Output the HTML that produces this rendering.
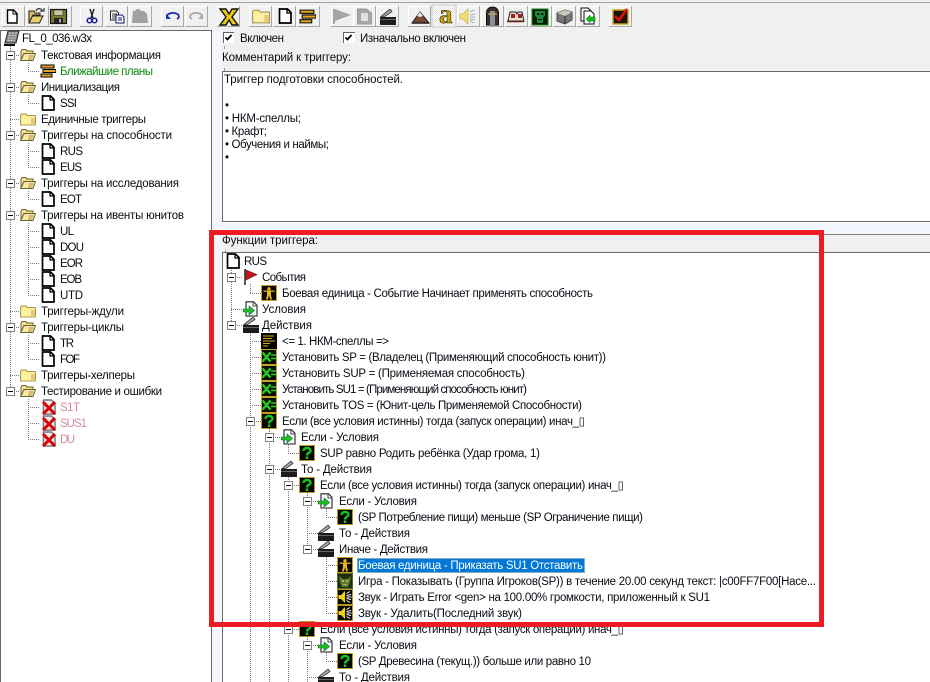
<!DOCTYPE html>
<html lang="ru">
<head>
<meta charset="utf-8">
<title>FL_0_036.w3x</title>
<style>
html,body{margin:0;padding:0;width:930px;height:682px;overflow:hidden;background:#f0f0f0}
svg{display:block;position:absolute;left:0;top:0}
text{font-family:"Liberation Sans",Arial,sans-serif;font-size:11.5px;fill:#0a0a14;white-space:pre}
.d{stroke:#777;stroke-width:1;stroke-dasharray:1 1;fill:none;shape-rendering:crispEdges}
.e{fill:#fff;stroke:#808080;stroke-width:1;shape-rendering:crispEdges}
.m{stroke:#000;stroke-width:1;shape-rendering:crispEdges}
.g{fill:#0a8a0a}
.p{fill:#d5899f}
</style>
</head>
<body>
<svg width="930" height="682" viewBox="0 0 930 682" xmlns="http://www.w3.org/2000/svg">
<defs>
<symbol id="doc" viewBox="0 0 16 16"><path d="M2.500 1h8l3.500 3.500V15h-11.500z" fill="#fff" stroke="#000" stroke-width="1.700"/><path d="M10 1v4h4" fill="none" stroke="#000" stroke-width="1.300"/></symbol>
<symbol id="fc" viewBox="0 0 16 16"><path d="M.5 14V4l1-1h5l1 1.500H15.500V14z" fill="#ffe98a" stroke="#a89a60"/><path d="M2 6h13v7H2z" fill="#fff2a8"/><path d="M11 7h4v6h-4z" fill="#e8c878"/></symbol>
<symbol id="fo" viewBox="0 0 16 16"><path d="M1 13V4l1-1.500h4l1 1.500h6v3H5z" fill="#f3df90" stroke="#6a6030"/><path d="M.8 13.500 4 6.500h11.500l-2.500 7z" fill="#f8e8a8" stroke="#6a6030"/><path d="M9 8h5l-2 5H8z" fill="#d8b878"/></symbol>
<symbol id="lst" viewBox="0 0 16 16"><path d="M1 2h13v3H1zM3 6.500h13v3H3zM1 11h11v3H1z" fill="#e5a820" stroke="#000"/></symbol>
<symbol id="flag" viewBox="0 0 16 16"><path d="M2 0v16" stroke="#222" stroke-width="1.500"/><path d="M3 1l11 4.500L3 11z" fill="#c8141e" stroke="#701014" stroke-width=".6"/></symbol>
<symbol id="unit" viewBox="0 0 16 16"><rect x=".5" y=".5" width="15" height="15" fill="#0a0a00" stroke="#c8a020"/><circle cx="8" cy="3.800" r="1.700" fill="#e8b820"/><path d="M2.500 5.500h11v1.300H10V10l1 4.500H9.300L8 10.500 6.700 14.500H5L6 10V6.800H2.500z" fill="#e8b820"/></symbol>
<symbol id="cond" viewBox="0 0 16 16"><path d="M3 .8h7.500L14 4.300V15H3z" fill="#fff" stroke="#444" stroke-width="1.300"/><path d="M10 1v4h4" fill="none" stroke="#444"/><path d="M0 8h6V5l5.500 4.500L6 14v-3H0z" fill="#1fc01f" stroke="#063" stroke-width=".6"/></symbol>
<symbol id="clap" viewBox="0 0 16 16"><rect x="0" y="8" width="16" height="8" fill="#1c1c1c"/><rect x="0" y="10" width="16" height="1" fill="#666"/><path d="M1 7.500 10 0l2 2.500L4 8z" fill="#a4a4a4" stroke="#222" stroke-width=".7"/></symbol>
<symbol id="cmt" viewBox="0 0 16 16"><rect width="16" height="16" fill="#060600"/><path d="M2 2.500h11v1H2zM2 5h9v1H2zM2 7.500h12v1H2zM2 10h7v1H2zM2 12.500h5v1H2z" fill="#d8a820"/></symbol>
<symbol id="set" viewBox="0 0 16 16"><rect x=".5" y=".5" width="15" height="15" fill="#081000" stroke="#c8a020"/><path d="M1.500 3.500l8 9M9.500 3.500l-8 9" stroke="#20d020" stroke-width="2.400"/><path d="M10 6h5M10 9.500h5" stroke="#20d020" stroke-width="1.600"/></symbol>
<symbol id="if" viewBox="0 0 16 16"><rect x=".5" y=".5" width="15" height="15" fill="#050800" stroke="#b89820"/><path d="M4.500 6C4.500 2 11.500 2 11.500 5.500 11.500 8 8 7.500 8 10.500" fill="none" stroke="#18c818" stroke-width="2.300"/><rect x="6.800" y="11.500" width="2.500" height="2.500" fill="#18c818"/></symbol>
<symbol id="gm" viewBox="0 0 16 16"><rect x=".5" y=".5" width="15" height="15" fill="#1e2c0e" stroke="#5a6a20"/><path d="M2 3l4 3h4l4-3-1 6-2 5H5L3 9z" fill="#5f7a2c"/><path d="M5 7h2v2H5zM9 7h2v2H9zM6 11h4v1H6z" fill="#a8b850"/></symbol>
<symbol id="snd" viewBox="0 0 16 16"><rect x=".5" y=".5" width="15" height="15" fill="#050500" stroke="#b89820"/><path d="M1.500 6h2.500l4-4v12l-4-4H1.500z" fill="#f0d010"/><path d="M9.500 4.500 13 2.500M9.500 6.500 14 5.500M9.500 8H14.500M9.500 9.500 14 10.500M9.500 11.500 13 13.500" stroke="#fff" stroke-width="1"/></symbol>
<symbol id="off" viewBox="0 0 16 16"><path d="M2.500 1h8l3.500 3.500V15H2.500z" fill="#eee" stroke="#777" stroke-width="1.500"/><path d="M2 3l12 12M14 3 2 15" stroke="#e00000" stroke-width="3"/></symbol>
<symbol id="map" viewBox="0 0 16 16"><path d="M4 1h11l-3 12H1z" fill="#8a8a8a" stroke="#222"/><path d="M5 3h8M4.500 5.500h7.500M4 8h7.500M3.500 10.500h7" stroke="#d0d0d0" stroke-dasharray="2 1"/><path d="M0 15h11" stroke="#111" stroke-width="2"/></symbol>
<pattern id="dith" width="2" height="2" patternUnits="userSpaceOnUse"><rect width="2" height="2" fill="#fff"/><rect width="1" height="1" fill="#e4e4e4"/><rect x="1" y="1" width="1" height="1" fill="#e4e4e4"/></pattern>
<symbol id="btn" viewBox="0 0 23 21"><rect width="23" height="21" fill="#f0f0f0"/><path d="M.5 20.500V.5h22" fill="none" stroke="#fff"/><path d="M22.500 0v20.500H0" fill="none" stroke="#a8a8a8"/></symbol>
</defs>

<!-- window background -->
<rect width="930" height="682" fill="#f0f0f0"/>
<rect y="2" width="930" height="1" fill="#a0a0a0"/>

<!-- toolbar buttons -->
<g>
<use href="#btn" x="2" y="6" width="23" height="21"/><use href="#btn" x="26" y="6" width="23" height="21"/><use href="#btn" x="49" y="6" width="23" height="21"/>
<use href="#btn" x="80" y="6" width="23" height="21"/><use href="#btn" x="105" y="6" width="23" height="21"/><use href="#btn" x="129" y="6" width="23" height="21"/>
<use href="#btn" x="161" y="6" width="23" height="21"/><use href="#btn" x="185" y="6" width="23" height="21"/>
<use href="#btn" x="217" y="6" width="23" height="21"/>
<use href="#btn" x="249" y="6" width="23" height="21"/><use href="#btn" x="273" y="6" width="23" height="21"/><use href="#btn" x="297" y="6" width="23" height="21"/>
<use href="#btn" x="331" y="6" width="23" height="21"/><use href="#btn" x="353" y="6" width="23" height="21"/><use href="#btn" x="376" y="6" width="23" height="21"/>
<use href="#btn" x="408" y="6" width="23" height="21"/>
<rect x="432" y="5" width="24" height="22" fill="url(#dith)" stroke="#c8c8c8"/>
<use href="#btn" x="457" y="6" width="23" height="21"/><use href="#btn" x="481" y="6" width="23" height="21"/><use href="#btn" x="505" y="6" width="23" height="21"/>
<use href="#btn" x="529" y="6" width="23" height="21"/><use href="#btn" x="553" y="6" width="23" height="21"/><use href="#btn" x="577" y="6" width="23" height="21"/>
<use href="#btn" x="609" y="6" width="23" height="21"/>
</g>

<!-- toolbar icons -->
<path d="M7.500 10h6l3.500 3.500V23H7.500z" fill="#fff" stroke="#000" stroke-width="1.400"/><path d="M13 10v4h4" fill="none" stroke="#000"/>
<path d="M29 23V11h5l1 2h5v2H33l-4 8z" fill="#d8c060" stroke="#222"/><path d="M29 23l3.500-7H43l-3.500 7z" fill="#e8d070" stroke="#222"/><path d="M36 11c1-3 4-3 6-1l-1 1h3v-3" fill="none" stroke="#333" stroke-width="1.200"/>
<rect x="50.500" y="9.500" width="16" height="14" fill="#7a7a30" stroke="#111" stroke-width="1.200"/><rect x="54" y="10" width="9" height="5.500" fill="#c8c8a0" stroke="#222" stroke-width=".6"/><rect x="54" y="18" width="9" height="5.500" fill="#222"/><rect x="59" y="19" width="2" height="3.500" fill="#aaa"/>
<path d="M94 9l-3 9M90 9l3 9" stroke="#111" stroke-width="1.300" fill="none"/><circle cx="89.500" cy="20.500" r="2.300" fill="none" stroke="#1a1aa0" stroke-width="1.500"/><circle cx="94.500" cy="20.500" r="2.300" fill="none" stroke="#1a1aa0" stroke-width="1.500"/>
<path d="M110.500 11h6l2 2v7h-8z" fill="#fff" stroke="#222"/><path d="M112 14h5M112 16h5M112 18h5" stroke="#334"/><path d="M116 15h6l2 2v6h-8z" fill="#fff" stroke="#12126a"/><path d="M118 18h4M118 20h4" stroke="#12126a"/>
<path d="M133 11h11l3 3 1 9h-16z" fill="#a0a0a0"/><circle cx="138" cy="12" r="3" fill="#a0a0a0"/>
<path d="M167 17a6 3.500 0 1 1 10 2" fill="none" stroke="#1a2ea8" stroke-width="1.800"/><path d="M166 14v5h5z" fill="#1a2ea8"/>
<path d="M202 17a6 3.500 0 1 0-10 2" fill="none" stroke="#a8a8a8" stroke-width="1.800"/><path d="M203 14v5h-5z" fill="#a8a8a8"/>
<path d="M220 9h6l3 5 3-5h6l-6 8 6 8h-6l-3-5-3 5h-6l6-8z" fill="#e8c810" stroke="#111" stroke-width="1.400"/>
<use href="#fc" x="252" y="7" width="18" height="18"/>
<use href="#doc" x="277" y="8" width="16" height="16"/>
<use href="#lst" x="299" y="8" width="17" height="17"/>
<path d="M334 9v15" stroke="#a6a6a6" stroke-width="2"/><path d="M335 9l16 6-16 6z" fill="#a6a6a6"/>
<path d="M357.500 9h9l5 4v11h-14z" fill="#a6a6a6" stroke="#999"/><rect x="361" y="13" width="7" height="8" fill="#e0e0e0"/>
<use href="#clap" x="380" y="9" width="16" height="16"/>
<path d="M412 23l8-11 9 11z" fill="#7a4a30" stroke="#222"/><path d="M417 16l3-4 3 4-3 1z" fill="#e8e8e8"/><path d="M412 23h17" stroke="#222" stroke-width="1.500"/>
<text x="439" y="23" style="font-size:27px;font-family:'Liberation Serif',serif;font-weight:bold;fill:#c8a010;stroke:#332800;stroke-width:.6">a</text>
<path d="M460 14h3l5-5v15l-5-5h-3z" fill="#efe070" stroke="#b8a840" stroke-width=".6"/><path d="M470 12l4-2M470 15l5-1M470 17h5M470 19l5 1M470 21l4 2" stroke="#b0b0b0"/>
<path d="M486.500 25V13c0-8 12-8 12 0v12z" fill="#36322a" stroke="#111"/><path d="M490 11h5v14h-5z" fill="#8a8f9a"/><path d="M488 14h9" stroke="#b8a060" stroke-width="1.500"/>
<path d="M508 21l2-9h6l1 2 1-2h4l2 9z" fill="#e8e0d0" stroke="#222"/><path d="M511 14h4v4h-4zM518 14h4v4h-4z" fill="#a82020"/><path d="M507 21.500h17" stroke="#6a2010" stroke-width="1.500"/>
<rect x="532" y="9" width="16" height="16" fill="#0a1a05" stroke="#118a11"/><path d="M535 11h10v5l-2 2v5h-6v-5l-2-2z" fill="#1c8a3a"/><path d="M537 13h2.500v2H537zM541 13h2.500v2H541zM538 19h4v1h-4z" fill="#062010"/>
<path d="M557 13l8-3 7 2v8l-7 4-8-3z" fill="#777" stroke="#444"/><path d="M557 13l8 3 7-4-7-2z" fill="#c8c8b8"/><path d="M565 16v8" stroke="#333"/>
<path d="M581 8h7l3 3v10h-10z" fill="#fff" stroke="#111"/><path d="M584 11h7l3 3v10h-10z" fill="#fff" stroke="#111"/><path d="M586 19l4-4v2h5v4h-5v2z" fill="#10c010" stroke="#063" stroke-width=".5"/>
<rect x="613" y="10" width="15" height="14" fill="#1a1400" stroke="#c8a020" stroke-width="1.400"/><path d="M615 16l4 4 8-11" fill="none" stroke="#e01010" stroke-width="2.600"/>

<!-- left panel -->
<rect x="1" y="30" width="210" height="652" fill="#fff"/>
<rect x="0" y="30" width="212" height="1" fill="#696969"/>
<rect x="0" y="30" width="1" height="652" fill="#696969"/>
<rect x="211" y="30" width="1" height="652" fill="#696969"/>

<!-- splitters -->
<rect x="212" y="30" width="10" height="652" fill="#f3f6fc"/>
<rect x="222" y="222" width="708" height="13" fill="#f3f6fc"/>
<rect x="222" y="222" width="708" height="1" fill="#fff"/>

<!-- comment box -->
<rect x="222" y="71" width="708" height="151" fill="#fff"/>
<rect x="222" y="71" width="708" height="1" fill="#696969"/>
<rect x="222" y="221" width="708" height="1" fill="#696969"/>
<rect x="222" y="71" width="1" height="151" fill="#696969"/>

<!-- functions area -->
<rect x="222" y="235" width="708" height="17" fill="#f0f0f0"/>
<rect x="222" y="234" width="708" height="1" fill="#808080"/>
<rect x="222" y="252" width="708" height="430" fill="#fff"/>
<rect x="222" y="252" width="708" height="1" fill="#696969"/>
<rect x="222" y="252" width="1" height="430" fill="#696969"/>
<rect x="224" y="46" width="1" height="3" fill="#999"/>
<rect x="224" y="68" width="1" height="3" fill="#999"/>
<rect x="225" y="250" width="1" height="2" fill="#999"/>

<!-- checkboxes -->
<rect x="223" y="32" width="11" height="11" fill="#fff"/><path d="M223.500 43V32.500H234" fill="none" stroke="#666"/><path d="M225.500 37.500l2 2 4-4.500" fill="none" stroke="#000" stroke-width="1.700"/>
<rect x="343" y="32" width="12" height="11" fill="#fff"/><path d="M343.500 43V32.500H355" fill="none" stroke="#666"/><path d="M345.500 37.500l2 2 4-4.500" fill="none" stroke="#000" stroke-width="1.700"/>
<text x="240" y="42" textLength="44" lengthAdjust="spacing">Включен</text>
<text x="360" y="42" textLength="106" lengthAdjust="spacing">Изначально включен</text>
<text x="222" y="61" textLength="129" lengthAdjust="spacing">Комментарий к триггеру:</text>

<!-- comment text -->
<text x="224" y="83" textLength="179" lengthAdjust="spacing">Триггер подготовки способностей.</text>
<text x="225" y="109">•</text>
<text x="225" y="122" textLength="76" lengthAdjust="spacing">• НКМ-спеллы;</text>
<text x="225" y="135" textLength="42" lengthAdjust="spacing">• Крафт;</text>
<text x="225" y="148" textLength="104" lengthAdjust="spacing">• Обучения и наймы;</text>
<text x="225" y="161">•</text>

<text x="222" y="244" textLength="96" lengthAdjust="spacing">Функции триггера:</text>

<!-- left tree lines -->
<path class="d" d="M10.500 46V391M28.500 63V71M28.500 95V103M28.500 143V167M28.500 191V199M28.500 223V295M28.500 335V359M28.500 399V439"/>
<path class="d" d="M10 55.500H20M10 87.500H20M10 119.500H20M10 135.500H20M10 183.500H20M10 215.500H20M10 311.500H20M10 327.500H20M10 375.500H20M10 391.500H20M28 71.500H40M28 103.500H40M28 151.500H40M28 167.500H40M28 199.500H40M28 231.500H40M28 247.500H40M28 263.500H40M28 279.500H40M28 295.500H40M28 343.500H40M28 359.500H40M28 407.500H40M28 423.500H40M28 439.500H40"/>

<!-- left tree icons -->
<use href="#map" x="4" y="30" width="16" height="16"/>
<use href="#fo" x="20" y="47" width="16" height="16"/>
<use href="#lst" x="40" y="63" width="16" height="16"/>
<use href="#fo" x="20" y="79" width="16" height="16"/>
<use href="#doc" x="40" y="95" width="16" height="16"/>
<use href="#fc" x="20" y="111" width="16" height="16"/>
<use href="#fo" x="20" y="127" width="16" height="16"/>
<use href="#doc" x="40" y="143" width="16" height="16"/>
<use href="#doc" x="40" y="159" width="16" height="16"/>
<use href="#fo" x="20" y="175" width="16" height="16"/>
<use href="#doc" x="40" y="191" width="16" height="16"/>
<use href="#fo" x="20" y="207" width="16" height="16"/>
<use href="#doc" x="40" y="223" width="16" height="16"/>
<use href="#doc" x="40" y="239" width="16" height="16"/>
<use href="#doc" x="40" y="255" width="16" height="16"/>
<use href="#doc" x="40" y="271" width="16" height="16"/>
<use href="#doc" x="40" y="287" width="16" height="16"/>
<use href="#fc" x="20" y="303" width="16" height="16"/>
<use href="#fo" x="20" y="319" width="16" height="16"/>
<use href="#doc" x="40" y="335" width="16" height="16"/>
<use href="#doc" x="40" y="351" width="16" height="16"/>
<use href="#fc" x="20" y="367" width="16" height="16"/>
<use href="#fo" x="20" y="383" width="16" height="16"/>
<use href="#off" x="41" y="399" width="16" height="16"/>
<use href="#off" x="41" y="415" width="16" height="16"/>
<use href="#off" x="41" y="431" width="16" height="16"/>

<!-- left tree expanders -->
<g class="e"><rect x="6.500" y="51.500" width="8" height="8"/><rect x="6.500" y="83.500" width="8" height="8"/><rect x="6.500" y="131.500" width="8" height="8"/><rect x="6.500" y="179.500" width="8" height="8"/><rect x="6.500" y="211.500" width="8" height="8"/><rect x="6.500" y="323.500" width="8" height="8"/><rect x="6.500" y="387.500" width="8" height="8"/></g>
<path class="m" d="M8 55.500h5M8 87.500h5M8 135.500h5M8 183.500h5M8 215.500h5M8 327.500h5M8 391.500h5"/>

<!-- left tree text -->
<text x="22" y="42" textLength="70" lengthAdjust="spacing">FL_0_036.w3x</text>
<text x="41" y="59" textLength="120" lengthAdjust="spacing">Текстовая информация</text>
<text x="60" y="75" textLength="93" lengthAdjust="spacing" class="g">Ближайшие планы</text>
<text x="41" y="91" textLength="79" lengthAdjust="spacing">Инициализация</text>
<text x="60" y="107" textLength="17" lengthAdjust="spacing">SSI</text>
<text x="41" y="123" textLength="105" lengthAdjust="spacing">Единичные триггеры</text>
<text x="41" y="139" textLength="131" lengthAdjust="spacing">Триггеры на способности</text>
<text x="60" y="155" textLength="23" lengthAdjust="spacing">RUS</text>
<text x="60" y="171" textLength="22" lengthAdjust="spacing">EUS</text>
<text x="41" y="187" textLength="138" lengthAdjust="spacing">Триггеры на исследования</text>
<text x="60" y="203" textLength="22" lengthAdjust="spacing">EOT</text>
<text x="41" y="219" textLength="143" lengthAdjust="spacing">Триггеры на ивенты юнитов</text>
<text x="60" y="235" textLength="14" lengthAdjust="spacing">UL</text>
<text x="60" y="251" textLength="24" lengthAdjust="spacing">DOU</text>
<text x="60" y="267" textLength="23" lengthAdjust="spacing">EOR</text>
<text x="60" y="283" textLength="22" lengthAdjust="spacing">EOB</text>
<text x="60" y="299" textLength="23" lengthAdjust="spacing">UTD</text>
<text x="41" y="315" textLength="83" lengthAdjust="spacing">Триггеры-ждули</text>
<text x="41" y="331" textLength="83" lengthAdjust="spacing">Триггеры-циклы</text>
<text x="60" y="347" textLength="14" lengthAdjust="spacing">TR</text>
<text x="60" y="363" textLength="20" lengthAdjust="spacing">FOF</text>
<text x="41" y="379" textLength="94" lengthAdjust="spacing">Триггеры-хелперы</text>
<text x="41" y="395" textLength="121" lengthAdjust="spacing">Тестирование и ошибки</text>
<text x="60" y="411" textLength="20" lengthAdjust="spacing" class="p">S1T</text>
<text x="60" y="427" textLength="27" lengthAdjust="spacing" class="p">SUS1</text>
<text x="60" y="443" textLength="15" lengthAdjust="spacing" class="p">DU</text>

<!-- right tree lines -->
<path class="d" d="M231.500 268V325M250.500 284V293M250.500 333V682M269.500 429V682M288.500 445V453M288.500 477V682M307.500 493V549M307.500 637V682M326.500 509V517M326.500 557V613M326.500 653V661"/>
<path class="d" d="M231 277.500H243M250 293.500H261M231 309.500H243M231 325.500H243M250 341.500H261M250 357.500H261M250 373.500H261M250 389.500H261M250 405.500H261M250 421.500H261M269 437.500H281M288 453.500H299M269 469.500H281M288 485.500H299M307 501.500H318M326 517.500H337M307 533.500H318M307 549.500H318M326 565.500H337M326 581.500H337M326 597.500H337M326 613.500H337M288 629.500H299M307 645.500H318M326 661.500H337M307 677.500H318"/>

<!-- right tree icons -->
<use href="#doc" x="225" y="253" width="16" height="16"/>
<use href="#flag" x="243" y="269" width="16" height="16"/>
<use href="#unit" x="261" y="285" width="16" height="16"/>
<use href="#cond" x="243" y="301" width="16" height="16"/>
<use href="#clap" x="243" y="317" width="16" height="16"/>
<use href="#cmt" x="261" y="333" width="16" height="16"/>
<use href="#set" x="261" y="349" width="16" height="16"/>
<use href="#set" x="261" y="365" width="16" height="16"/>
<use href="#set" x="261" y="381" width="16" height="16"/>
<use href="#set" x="261" y="397" width="16" height="16"/>
<use href="#if" x="261" y="413" width="16" height="16"/>
<use href="#cond" x="281" y="429" width="16" height="16"/>
<use href="#if" x="299" y="445" width="16" height="16"/>
<use href="#clap" x="281" y="461" width="16" height="16"/>
<use href="#if" x="299" y="477" width="16" height="16"/>
<use href="#cond" x="318" y="493" width="16" height="16"/>
<use href="#if" x="337" y="509" width="16" height="16"/>
<use href="#clap" x="318" y="525" width="16" height="16"/>
<use href="#clap" x="318" y="541" width="16" height="16"/>
<use href="#unit" x="337" y="557" width="16" height="16"/>
<use href="#gm" x="337" y="573" width="16" height="16"/>
<use href="#snd" x="337" y="589" width="16" height="16"/>
<use href="#snd" x="337" y="605" width="16" height="16"/>
<use href="#if" x="299" y="621" width="16" height="16"/>
<use href="#cond" x="318" y="637" width="16" height="16"/>
<use href="#if" x="337" y="653" width="16" height="16"/>
<use href="#clap" x="318" y="669" width="16" height="16"/>

<!-- right tree expanders -->
<g class="e"><rect x="227.500" y="273.500" width="8" height="8"/><rect x="227.500" y="321.500" width="8" height="8"/><rect x="246.500" y="417.500" width="8" height="8"/><rect x="265.500" y="433.500" width="8" height="8"/><rect x="265.500" y="465.500" width="8" height="8"/><rect x="284.500" y="481.500" width="8" height="8"/><rect x="303.500" y="497.500" width="8" height="8"/><rect x="303.500" y="545.500" width="8" height="8"/><rect x="284.500" y="625.500" width="8" height="8"/><rect x="303.500" y="641.500" width="8" height="8"/></g>
<path class="m" d="M229 277.500h5M229 325.500h5M248 421.500h5M267 437.500h5M267 469.500h5M286 485.500h5M305 501.500h5M305 549.500h5M286 629.500h5M305 645.500h5"/>

<!-- selection -->
<rect x="357" y="558" width="228" height="15" fill="#0078d7"/>
<rect x="357.500" y="558.500" width="227" height="14" fill="none" stroke="#ffe9a0" stroke-dasharray="1 1" shape-rendering="crispEdges"/>

<!-- right tree text -->
<text x="244" y="265" textLength="23" lengthAdjust="spacing">RUS</text>
<text x="262" y="281" textLength="44" lengthAdjust="spacing">События</text>
<text x="282" y="297" textLength="311" lengthAdjust="spacing">Боевая единица - Событие Начинает применять способность</text>
<text x="262" y="313" textLength="44" lengthAdjust="spacing">Условия</text>
<text x="262" y="329" textLength="50" lengthAdjust="spacing">Действия</text>
<text x="282" y="345" textLength="107" lengthAdjust="spacing">&lt;= 1. НКМ-спеллы =&gt;</text>
<text x="282" y="361" textLength="324" lengthAdjust="spacing">Установить SP = (Владелец (Применяющий способность юнит))</text>
<text x="282" y="377" textLength="243" lengthAdjust="spacing">Установить SUP = (Применяемая способность)</text>
<text x="282" y="393" textLength="245" lengthAdjust="spacing">Установить SU1 = (Применяющий способность юнит)</text>
<text x="282" y="409" textLength="300" lengthAdjust="spacing">Установить TOS = (Юнит-цель Применяемой Способности)</text>
<text x="282" y="425" textLength="303" lengthAdjust="spacing">Если (все условия истинны) тогда (запуск операции) инач_▯</text>
<text x="301" y="441" textLength="78" lengthAdjust="spacing">Если - Условия</text>
<text x="320" y="457" textLength="220" lengthAdjust="spacing">SUP равно Родить ребёнка (Удар грома, 1)</text>
<text x="301" y="473" textLength="71" lengthAdjust="spacing">То - Действия</text>
<text x="320" y="489" textLength="304" lengthAdjust="spacing">Если (все условия истинны) тогда (запуск операции) инач_▯</text>
<text x="339" y="505" textLength="78" lengthAdjust="spacing">Если - Условия</text>
<text x="358" y="521" textLength="285" lengthAdjust="spacing">(SP Потребление пищи) меньше (SP Ограничение пищи)</text>
<text x="339" y="537" textLength="71" lengthAdjust="spacing">То - Действия</text>
<text x="339" y="553" textLength="89" lengthAdjust="spacing">Иначе - Действия</text>
<text x="358" y="569" textLength="225" lengthAdjust="spacing" style="fill:#fff">Боевая единица - Приказать SU1 Отставить</text>
<text x="358" y="585" textLength="458" lengthAdjust="spacing">Игра - Показывать (Группа Игроков(SP)) в течение 20.00 секунд текст: |c00FF7F00[Насе...</text>
<text x="358" y="601" textLength="352" lengthAdjust="spacing">Звук - Играть Error &lt;gen&gt; на 100.00% громкости, приложенный к SU1</text>
<text x="358" y="617" textLength="164" lengthAdjust="spacing">Звук - Удалить(Последний звук)</text>
<text x="320" y="633" textLength="304" lengthAdjust="spacing">Если (все условия истинны) тогда (запуск операции) инач_▯</text>
<text x="339" y="649" textLength="78" lengthAdjust="spacing">Если - Условия</text>
<text x="358" y="665" textLength="233" lengthAdjust="spacing">(SP Древесина (текущ.)) больше или равно 10</text>
<text x="339" y="681" textLength="71" lengthAdjust="spacing">То - Действия</text>

<!-- red annotation rectangle -->
<rect x="211.500" y="232.500" width="610" height="392" fill="none" stroke="#ed1c24" stroke-width="5"/>
</svg>
</body>
</html>
